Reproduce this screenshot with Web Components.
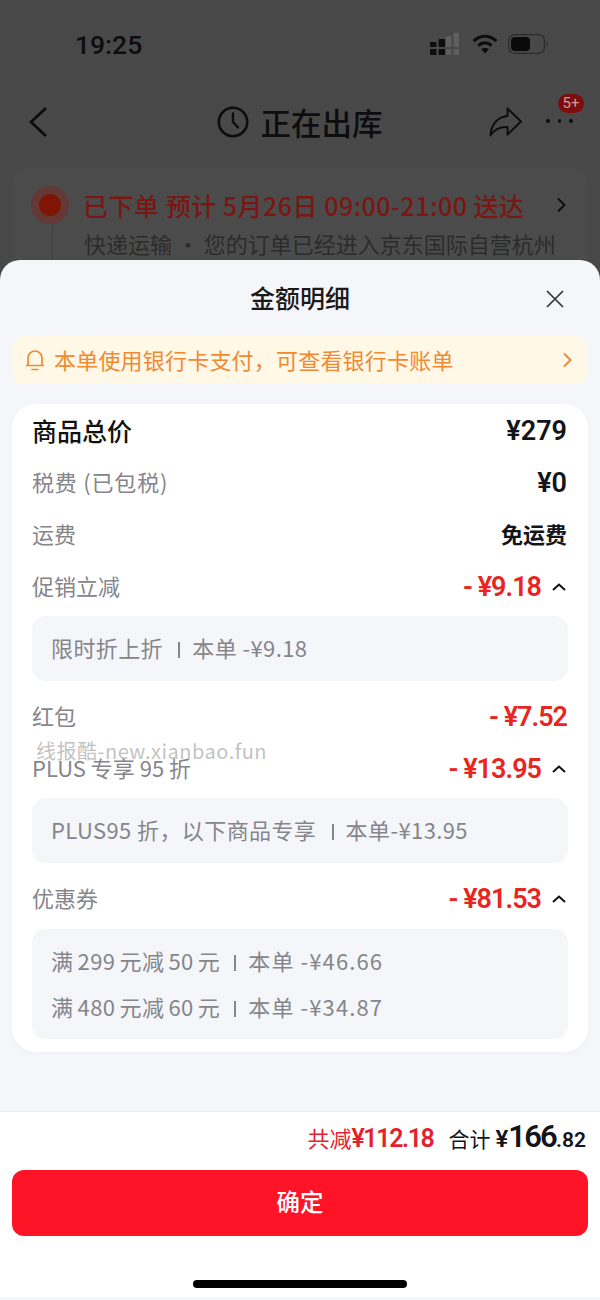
<!DOCTYPE html>
<html lang="zh">
<head>
<meta charset="utf-8">
<title>金额明细</title>
<style>
html, body { margin: 0; padding: 0; }
body {
  width: 600px;
  height: 1300px;
  overflow: hidden;
  background: #484848;
  font-family: "Noto Sans CJK SC", "Noto Sans", sans-serif;
}
</style>
</head>
<body>
<order-backdrop></order-backdrop>
<fee-sheet>
  <bank-banner>本单使用银行卡支付，可查看银行卡账单</bank-banner>
  <fee-card>
    <fee-row strong label="商品总价" amount="¥279"></fee-row>
    <fee-row label="税费 (已包税)" amount="¥0" spaced></fee-row>
    <fee-row label="运费" amount="免运费"></fee-row>
    <fee-row label="促销立减" amount="- ¥9.18" discount open>
      <fee-detail>限时折上折 <i></i>本单 -¥9.18</fee-detail>
    </fee-row>
    <fee-row label="红包" amount="- ¥7.52" discount></fee-row>
    <fee-row label="PLUS 专享 95 折" amount="- ¥13.95" discount open>
      <fee-detail>PLUS95 折，以下商品专享 <i></i>本单-¥13.95</fee-detail>
    </fee-row>
    <fee-row label="优惠券" amount="- ¥81.53" discount open>
      <fee-detail tight>满 299 元减 50 元 <i></i><b>本单 -¥46.66</b></fee-detail>
      <fee-detail tight>满 480 元减 60 元 <i></i><b>本单 -¥34.87</b></fee-detail>
    </fee-row>
  </fee-card>
</fee-sheet>
<pay-footer></pay-footer>

<script>
const cjk = `"Noto Sans CJK SC", "Noto Sans", sans-serif`;
const digits = `Roboto, "Noto Sans CJK SC", sans-serif`;

class OrderBackdrop extends HTMLElement {
  constructor() {
    super();
    this.shadow = this.attachShadow({mode: "open"});
    this.render();
  }
  render() {
    this.shadow.innerHTML = `
    <style>
      :host { display: block; height: 260px; overflow: hidden; background: #484848; color: #0d0d0d; }
      .status { display: flex; align-items: center; height: 88px; padding: 0 52px 0 75px; }
      .time { font: 500 26.5px/1 ${digits}; flex: 1; padding-top: 2px; }
      .status svg { display: block; }
      .nav { display: flex; align-items: center; height: 68px; padding: 0 27px 0 28px; }
      .title { flex: 1; display: flex; align-items: center; justify-content: center; gap: 12px; font: 500 30.5px/1 ${cjk}; margin-left: 60px; }
      .more { position: relative; margin-left: 23px; width: 27px; height: 6px; display: flex; gap: 8px; }
      .more b { width: 4px; height: 4px; border-radius: 50%; background: #0d0d0d; }
      .badge { position: absolute; left: 12px; top: -25px; width: 26px; height: 19px; border-radius: 10px; background: #7d0c0c; color: #c9a0a0; font: 400 15px/19px ${digits}; text-align: center; }
      .card { margin: 12px 12px 0; height: 120px; background: #4b4b4b; border-radius: 16px 16px 0 0; padding: 17px 20px 0 20px; box-sizing: border-box; }
      .l1 { display: flex; align-items: center; color: #7a1712; font: 500 25px/40px ${cjk}; letter-spacing: .5px; white-space: nowrap; }
      .dot { width: 38px; height: 38px; border-radius: 50%; background: #643834; display: flex; align-items: center; justify-content: center; margin-right: 14px; margin-left: -1px; flex: none; }
      .dot b { width: 22px; height: 22px; border-radius: 50%; background: #7e1505; }
      .l1 span { flex: 1; }
      .l2 { color: #2b2b2b; font: 400 22px/36px ${cjk}; padding: 0 0 0 31px; white-space: nowrap; border-left: 1px solid #404040; margin-left: 20px; }
    </style>
    <div class="status">
      <div class="time">19:25</div>
      <svg width="30" height="22" viewBox="0 0 28 22" preserveAspectRatio="none"><g fill="#0d0d0d"><rect x="0" y="9" width="6" height="5" rx="1"/><rect x="0" y="16" width="6" height="6" rx="1"/><rect x="8" y="6" width="6" height="8" rx="1"/><rect x="8" y="16" width="6" height="6" rx="1"/></g><g fill="#5f5f5f"><rect x="15" y="3" width="5" height="11" rx="1"/><rect x="15" y="16" width="5" height="6" rx="1"/><rect x="22" y="0" width="5" height="14" rx="1"/><rect x="22" y="16" width="5" height="6" rx="1"/></g></svg>
      <svg width="26" height="20" viewBox="0 0 26 20" style="margin-left:12px"><g fill="none" stroke="#0d0d0d" stroke-width="3.2"><path d="M1.6 7.2C8.5 .6 17.500 .6 24.400 7.200"/><path d="M6.300 11.600C10.300 8 15.700 8 19.700 11.600"/></g><path d="M13 19.500 9.200 15.300C11.400 13.500 14.600 13.500 16.800 15.300Z" fill="#0d0d0d"/></svg>
      <svg width="40" height="20" viewBox="0 0 40 20" style="margin-left:10px"><rect x=".6" y=".6" width="35.800" height="18.800" rx="6" fill="none" stroke="#2a2a2a" stroke-width="1.200"/><rect x="3" y="3" width="19" height="14" rx="4" fill="#0a0a0a"/><rect x="38" y="7" width="2" height="6" rx="1" fill="#3a3a3a"/></svg>
    </div>
    <div class="nav">
      <svg width="22" height="32" viewBox="0 0 22 32"><path d="M18 2 3 16l15 14" fill="none" stroke="#0d0d0d" stroke-width="2.800"/></svg>
      <div class="title">
        <svg width="32" height="32" viewBox="0 0 32 32"><circle cx="16" cy="16" r="14.200" fill="none" stroke="#0d0d0d" stroke-width="2.600"/><path d="M16 7.500V16l5 5.500" fill="none" stroke="#0d0d0d" stroke-width="2.400" stroke-linecap="round"/></svg>
        <span>正在出库</span>
      </div>
      <svg width="34" height="30" viewBox="0 0 34 30"><path d="M18.500 1.500 32 14.500 18.500 27.500V20C11 19.500 5.500 22 1.500 28.500 2 18 8 10 18.500 9Z" fill="none" stroke="#0d0d0d" stroke-width="2" stroke-linejoin="round"/></svg>
      <div class="more"><b></b><b></b><b></b><div class="badge">5+</div></div>
    </div>
    <div class="card">
      <div class="l1">
        <div class="dot"><b></b></div>
        <span>已下单 预计 5月26日 09:00-21:00 送达</span>
        <svg width="10" height="16" viewBox="0 0 10 16" style="margin-right:2px"><path d="M2 1.500 8.500 8 2 14.500" fill="none" stroke="#0d0d0d" stroke-width="1.800"/></svg>
      </div>
      <div class="l2">快递运输 · 您的订单已经进入京东国际自营杭州</div>
    </div>`;
  }
}

class FeeSheet extends HTMLElement {
  constructor() {
    super();
    this.shadow = this.attachShadow({mode: "open"});
    this.shadow.innerHTML = `
    <style>
      :host { display: block; position: relative; height: 852px; box-sizing: border-box; background: #f5f6fa; border-radius: 20px 20px 0 0; padding: 0 12px; border-bottom: 1px solid #ebebef; }
      .head { display: flex; align-items: center; justify-content: center; height: 76px; padding-bottom: 2px; box-sizing: border-box; position: relative; font: 500 25px/1 ${cjk}; color: #1a1a1a; }
      .close { position: absolute; right: 23px; top: 29px; display: block; }
      ::slotted(bank-banner) { margin-bottom: 20px; }
      .mark { position: absolute; left: 36px; top: 477px; font: 400 20px/28px ${cjk}; letter-spacing: .5px; color: rgba(170,170,170,.72); white-space: nowrap; }
    </style>
    <div class="head">金额明细
      <svg class="close" width="20" height="20" viewBox="0 0 20 20"><path d="M2 2l16 16M18 2 2 18" stroke="#333" stroke-width="1.700" fill="none"/></svg>
    </div>
    <slot></slot>
    <div class="mark">线报酷-new.xianbao.fun</div>`;
  }
}

class BankBanner extends HTMLElement {
  constructor() {
    super();
    this.shadow = this.attachShadow({mode: "open"});
    this.shadow.innerHTML = `
    <style>
      :host { display: flex; align-items: center; height: 48px; background: #fff8e6; border-radius: 12px; color: #ef8a33; font: 400 22px/1 ${cjk}; padding: 0 16px 0 14px; }
      .bell { margin-right: 10px; flex: none; }
      .txt { flex: 1; white-space: nowrap; letter-spacing: .2px; padding-bottom: 2px; }
    </style>
    <svg class="bell" width="18" height="22" viewBox="0 0 18 22"><path d="M2 16.500V9a7 7 0 0 1 14 0v7.500M.5 16.500h17M6 20.500h6" fill="none" stroke="#ef8a33" stroke-width="1.700" stroke-linecap="round"/></svg>
    <div class="txt"><slot></slot></div>
    <svg width="10" height="16" viewBox="0 0 10 16"><path d="M2 1.500 8.500 8 2 14.500" fill="none" stroke="#ef8a33" stroke-width="2"/></svg>`;
  }
}

class FeeCard extends HTMLElement {
  constructor() {
    super();
    this.shadow = this.attachShadow({mode: "open"});
    this.shadow.innerHTML = `
    <style>
      :host { display: block; background: #fff; border-radius: 24px; height: 648px; box-sizing: border-box; padding: 1px 20px 0; box-shadow: 0 2px 6px rgba(0,0,0,.025); }
    </style>
    <slot></slot>`;
  }
}

class FeeRow extends HTMLElement {
  constructor() {
    super();
    this.shadow = this.attachShadow({mode: "open"});
  }
  connectedCallback() {
    const strong = this.hasAttribute("strong");
    const discount = this.hasAttribute("discount");
    const open = this.hasAttribute("open");
    const amount = this.getAttribute("amount");
    this.shadow.innerHTML = `
    <style>
      :host { display: block; }
      .row { display: flex; align-items: center; height: 52px; padding-right: 1px; }
      .label { flex: 1; font: ${strong ? "500 25px" : "400 22px"}/1 ${cjk}; color: ${strong ? "#111" : "#85858a"}; letter-spacing: ${this.hasAttribute("spaced") ? ".8px" : "0"}; padding-bottom: ${strong ? 2 : 4}px; white-space: nowrap; }
      .amount { font: 600 ${/¥/.test(amount) ? "27px" : "22px"}/1 ${digits}; color: ${discount ? "#e8261f" : "#14151a"}; letter-spacing: ${discount ? "-1px" : "0"}; padding-top: 1px; white-space: nowrap; }
      .chev { margin-left: 10px; display: block; }
      .sub { display: flex; flex-direction: column; background: #f5f6fa; border-radius: 14px; padding: 8px 20px 11px 19px; margin: 3px 0 10px; }
      :host(:last-child) .sub { margin-top: 4px; padding-bottom: 10px; }
    </style>
    <div class="row">
      <div class="label">${this.getAttribute("label")}</div>
      <div class="amount">${amount}</div>
      ${open ? `<svg class="chev" width="16" height="10" viewBox="0 0 16 10"><path d="M2 8 8 2.500 14 8" fill="none" stroke="#111" stroke-width="2"/></svg>` : ""}
    </div>
    ${open ? `<div class="sub"><slot></slot></div>` : ""}`;
  }
}

class FeeDetail extends HTMLElement {
  constructor() {
    super();
    this.shadow = this.attachShadow({mode: "open"});
    this.shadow.innerHTML = `
    <style>
      :host { display: block; font: 400 22px/46px ${cjk}; letter-spacing: .4px; color: #85858a; white-space: nowrap; }
      :host([tight]) { word-spacing: -1.2px; }
      ::slotted(i) { display: inline-block; width: 2px; height: 16px; background: #85858a; margin: 0 12px 0 10px; vertical-align: -1px; }
      ::slotted(b) { font-weight: 400; letter-spacing: 1.1px; word-spacing: 0; }
    </style>
    <slot></slot>`;
  }
}

class PayFooter extends HTMLElement {
  constructor() {
    super();
    this.shadow = this.attachShadow({mode: "open"});
    this.shadow.innerHTML = `
    <style>
      :host { display: block; height: 188px; box-sizing: border-box; background: #fff; padding: 0 12px; position: relative; border-bottom: 3px solid #f5f6fa; }
      .sum { display: flex; justify-content: flex-end; align-items: baseline; height: 58px; line-height: 50px; padding-right: 2px; white-space: nowrap; }
      .cut { color: #e51f30; font: 400 22px/50px ${cjk}; margin-right: 15px; }
      .cut b { font: 600 25px/50px ${digits}; letter-spacing: -1.4px; }
      .all { color: #14151a; font: 400 21px/50px ${cjk}; }
      .all b { font: 600 24px/50px ${digits}; margin-left: 5px; }
      .all b.big { font-size: 31px; margin-left: 0; letter-spacing: -1.8px; }
      .all b.small { font-size: 21px; margin-left: 0; }
      button { display: block; width: 100%; height: 66px; border: 0; padding: 0 0 2px; border-radius: 12px; background: #ff1427; color: #fff; font: 500 23.500px/1 ${cjk}; }
      .home { position: absolute; left: 193px; top: 168px; width: 214px; height: 8px; border-radius: 4px; background: #000; }
    </style>
    <div class="sum">
      <div class="cut">共减<b>¥112.18</b></div>
      <div class="all">合计<b>¥</b><b class="big">166</b><b class="small">.82</b></div>
    </div>
    <button>确定</button>
    <div class="home"></div>`;
  }
}

customElements.define("order-backdrop", OrderBackdrop);
customElements.define("fee-sheet", FeeSheet);
customElements.define("bank-banner", BankBanner);
customElements.define("fee-card", FeeCard);
customElements.define("fee-row", FeeRow);
customElements.define("fee-detail", FeeDetail);
customElements.define("pay-footer", PayFooter);
</script>
</body>
</html>
